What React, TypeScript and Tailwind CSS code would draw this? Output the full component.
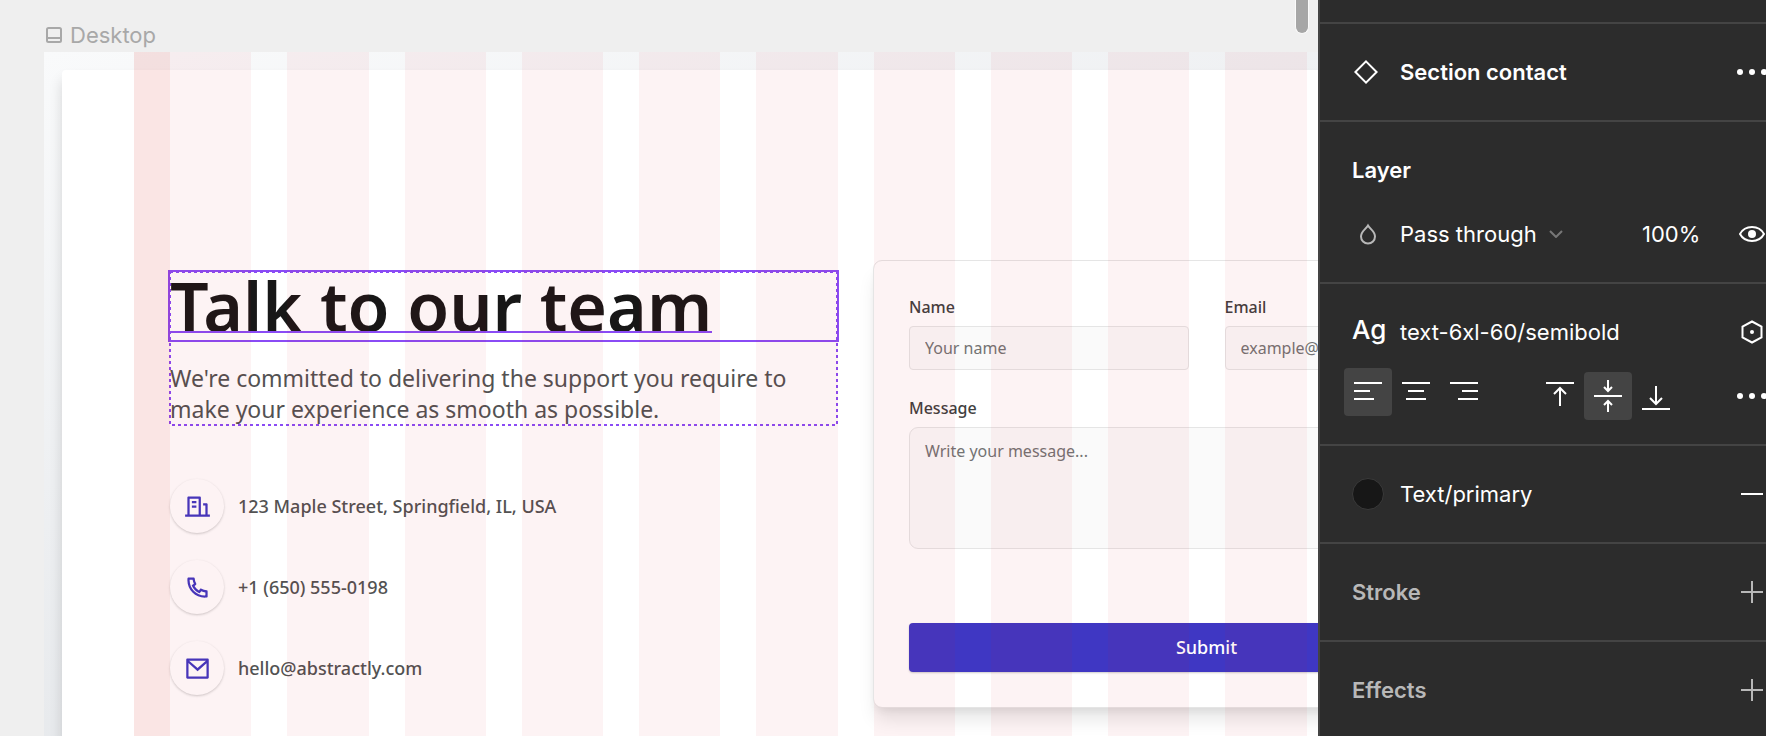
import React from "react";

const purple = "#8a4bf5";

function Rule() {
  return <hr className="h-0.5 border-0 bg-[#444444]" />;
}

const contacts = [
  {
    text: "123 Maple Street, Springfield, IL, USA",
    icon: "M21 19H23V21H1V19H3V4C3 3.45 3.45 3 4 3H14C14.55 3 15 3.45 15 4V19H19V11H17V9H20C20.55 9 21 9.45 21 10V19ZM5 5V19H13V5H5ZM7 11H11V13H7V11ZM7 7H11V9H7V7Z",
  },
  {
    text: "+1 (650) 555-0198",
    icon: "M9.366 10.682C10.304 12.33 11.67 13.696 13.318 14.634L14.202 13.396C14.498 12.982 15.056 12.861 15.503 13.113C16.919 13.887 18.484 14.357 20.121 14.487C20.643 14.529 21 14.965 21 15.484V19.923C21 20.436 20.612 20.866 20.102 20.918C19.572 20.973 19.04 21 18.5 21C9.94 21 3 14.06 3 5.5C3 4.96 3.027 4.427 3.082 3.898C3.134 3.388 3.564 3 4.077 3H8.516C9.035 3 9.471 3.398 9.513 3.915C9.643 5.516 10.113 7.081 10.887 8.497C11.139 8.944 11.018 9.502 10.604 9.798L9.366 10.682ZM6.844 10.025L8.744 8.668C8.205 7.505 7.836 6.271 7.647 5H5.01C5.003 5.166 5 5.333 5 5.5C5 12.956 11.044 19 18.5 19C18.667 19 18.834 18.997 19 18.99V16.353C17.729 16.164 16.495 15.795 15.332 15.256L13.975 17.156C13.429 16.944 12.899 16.693 12.388 16.406L12.33 16.373C10.369 15.256 8.744 13.631 7.627 11.67L7.594 11.612C7.307 11.101 7.056 10.571 6.844 10.025Z",
  },
  {
    text: "hello@abstractly.com",
    icon: "M3 3H21C21.552 3 22 3.448 22 4V20C22 20.552 21.552 21 21 21H3C2.448 21 2 20.552 2 20V4C2 3.448 2.448 3 3 3ZM20 7.238L12.072 14.338L4 7.216V19H20V7.238ZM4.511 5L12.061 11.662L19.502 5H4.511Z",
  },
];

function DesignFrame() {
  return (
    <div className="relative w-[1622px] grow bg-[linear-gradient(163deg,#f9fafb_0%,#d2d6db_130%)] px-[18px] pt-[18px] font-['Noto_Sans',sans-serif]">
      <div className="min-h-full rounded-t-[4px] bg-white px-[108px] pt-[190px] pb-8 shadow-[0_10px_14px_rgba(0,0,0,0.14)]">
        <div className="grid grid-cols-2 gap-9">
          <div className="pt-3">
            <div className="relative">
              <div className="relative">
                <h1 className="text-[68px] leading-[68px] font-semibold text-[#171717]">
                  <span className="relative inline-block">
                    Talk to our team
                    <span className="absolute inset-x-0 top-[59px] h-0.5 bg-[#8a4bf5]" />
                  </span>
                </h1>
                <span className="absolute -inset-0.5 border-2 border-[#8a4bf5]" />
              </div>
              <p className="mt-[23px] text-[23px] leading-[31px] text-[#525252]">
                We're committed to delivering the support you require to
                <br />
                make your experience as smooth as possible.
              </p>
              <svg className="absolute inset-0 size-full overflow-visible" aria-hidden="true">
                <rect width="100%" height="100%" fill="none" stroke={purple} strokeWidth="2" strokeDasharray="3 3" />
              </svg>
            </div>
            <ul className="mt-[54px] flex flex-col gap-[27px]">
              {contacts.map((c) => (
                <li key={c.text} className="flex items-center gap-[14px]">
                  <span className="flex size-[54px] items-center justify-center rounded-full bg-white shadow-[0_1px_3px_rgba(0,0,0,0.12),0_1px_2px_rgba(0,0,0,0.08)]">
                    <svg viewBox="0 0 24 24" className="size-[27px]" fill="#4037c1" aria-hidden="true">
                      <path d={c.icon} />
                    </svg>
                  </span>
                  <span className="text-[18px] leading-[27px] font-medium text-[#525252]">{c.text}</span>
                </li>
              ))}
            </ul>
          </div>

          <form
            className="rounded-[9px] border border-[#e5e5e5] bg-white p-[35px] shadow-[0_14px_18px_-3px_rgba(0,0,0,0.1),0_5px_7px_-2px_rgba(0,0,0,0.06)]"
            onSubmit={(e) => e.preventDefault()}
          >
            <div className="grid grid-cols-2 gap-9">
              <div className="flex flex-col gap-[7px]">
                <label htmlFor="name" className="text-[16px] leading-[23px] font-medium text-[#404040]">
                  Name
                </label>
                <input
                  id="name"
                  placeholder="Your name"
                  className="h-11 w-full rounded-[4px] border border-[#e5e5e5] bg-[#fafafa] px-[15px] text-[16px] leading-[23px] placeholder:text-[#737373]"
                />
              </div>
              <div className="flex flex-col gap-[7px]">
                <label htmlFor="email" className="text-[16px] leading-[23px] font-medium text-[#404040]">
                  Email
                </label>
                <input
                  id="email"
                  type="email"
                  placeholder="example@example.com"
                  className="h-11 w-full rounded-[4px] border border-[#e5e5e5] bg-[#fafafa] px-[15px] text-[16px] leading-[23px] placeholder:text-[#737373]"
                />
              </div>
            </div>
            <div className="mt-[27px] flex flex-col gap-[7px]">
              <label htmlFor="message" className="text-[16px] leading-[23px] font-medium text-[#404040]">
                Message
              </label>
              <textarea
                id="message"
                placeholder="Write your message..."
                className="h-[122px] w-full resize-none rounded-[9px] border border-[#e5e5e5] bg-[#fafafa] px-[15px] py-3 text-[16px] leading-[23px] placeholder:text-[#737373]"
              />
            </div>
            <button
              type="submit"
              className="mt-[74px] h-[49px] w-full rounded-[4px] bg-[#3f37c3] text-[18px] leading-[27px] font-medium text-white shadow-[0_1px_2px_rgba(0,0,0,0.2)]"
            >
              Submit
            </button>
          </form>
        </div>
      </div>

      <div className="pointer-events-none absolute inset-y-0 left-[90px] flex" aria-hidden="true">
        <div className="w-9 bg-[#d11209]/11" />
        <div className="grid w-[1371px] grid-cols-12 gap-9">
          {Array.from({ length: 12 }, (_, i) => (
            <div key={i} className="bg-[#d71428]/5" />
          ))}
        </div>
      </div>
    </div>
  );
}

function Dots() {
  return (
    <svg viewBox="0 0 30 6" className="h-1.5 w-[30px]" fill="#fff" aria-hidden="true">
      <circle cx="3" cy="3" r="3" />
      <circle cx="15" cy="3" r="3" />
      <circle cx="27" cy="3" r="3" />
    </svg>
  );
}

function Plus() {
  return (
    <svg viewBox="0 0 22 22" className="size-[22px]" stroke="#b8b8b8" strokeWidth="2" aria-hidden="true">
      <path d="M11 0V22M0 11H22" />
    </svg>
  );
}

const aligns = [
  { label: "Align left", d: "M0 1H28M0 9H16M0 17H20" },
  { label: "Align center", d: "M0 1H28M6 9H22M4 17H24" },
  { label: "Align right", d: "M0 1H28M12 9H28M8 17H28" },
];

const valigns = [
  { label: "Align top", d: "M0 3H28M14 26V8M8 14L14 8L20 14" },
  { label: "Align middle", d: "M0 16H28M14 0V11M10 7L14 11L18 7M14 32V21M10 25L14 21L18 25" },
  { label: "Align bottom", d: "M0 29H28M14 6V24M8 18L14 24L20 18" },
];

function Inspector() {
  return (
    <aside className="w-[448px] shrink-0 overflow-hidden border-l-2 border-[#444444] bg-[#2c2c2c] font-['Inter',sans-serif] text-[22px] leading-8 text-white">
      <div className="w-[480px]">
        <div className="h-[22px]" />
        <Rule />
        <section className="flex h-24 items-center pl-[34px]">
          <svg viewBox="0 0 24 24" className="size-6" fill="none" stroke="#fff" strokeWidth="2" aria-hidden="true">
            <path d="M12 1.4L22.6 12L12 22.6L1.4 12Z" />
          </svg>
          <h2 className="ml-[22px] w-[337px] font-semibold">Section contact</h2>
          <button type="button" aria-label="More options">
            <Dots />
          </button>
        </section>
        <Rule />
        <section className="h-40 pt-8 pl-8">
          <h2 className="font-semibold">Layer</h2>
          <div className="mt-8 flex items-center">
            <svg viewBox="0 0 32 32" className="size-8" fill="none" stroke="#b8b8b8" strokeWidth="2" aria-hidden="true">
              <path d="M16 7.500C18.500 11.500 23 13.500 23 18.500A7 7 0 0 1 9 18.500C9 13.500 13.500 11.500 16 7.500Z" />
            </svg>
            <button type="button" className="ml-4 flex w-[242px] items-center gap-3">
              Pass through
              <svg viewBox="0 0 14 8" className="h-2 w-[14px]" fill="none" stroke="#777" strokeWidth="2" aria-hidden="true">
                <path d="M1 1L7 7L13 1" />
              </svg>
            </button>
            <span className="w-[97px]">100%</span>
            <button type="button" aria-label="Toggle visibility">
              <svg viewBox="0 0 26 16" className="h-4 w-[26px]" fill="none" stroke="#fff" strokeWidth="2" aria-hidden="true">
                <path d="M1 8C6 -1.300 20 -1.300 25 8C20 17.300 6 17.300 1 8Z" />
                <circle cx="13" cy="8" r="4" fill="#fff" stroke="none" />
              </svg>
            </button>
          </div>
        </section>
        <Rule />
        <section className="h-40 pt-8">
          <div className="flex items-center pl-8">
            <span className="-mt-1 w-12 text-[26px] font-medium">Ag</span>
            <span className="w-[341px]">text-6xl-60/semibold</span>
            <button type="button" aria-label="Edit style">
              <svg viewBox="0 0 22 24" className="h-6 w-[22px]" fill="none" stroke="#fff" strokeWidth="2" aria-hidden="true">
                <path d="M11 1.500L20.500 6.700V17.300L11 22.500L1.500 17.300V6.700Z" />
                <circle cx="11" cy="12" r="2" fill="#fff" stroke="none" />
              </svg>
            </button>
          </div>
          <div className="mt-5 flex items-start pl-6">
            <div className="flex">
              {aligns.map((a, i) => (
                <button
                  key={a.label}
                  type="button"
                  aria-label={a.label}
                  className={
                    i === 0
                      ? "flex size-12 items-center justify-center rounded bg-[#444444]"
                      : "flex size-12 items-center justify-center"
                  }
                >
                  <svg viewBox="0 0 28 20" className="h-5 w-7" stroke="#fff" strokeWidth="2">
                    <path d={a.d} />
                  </svg>
                </button>
              ))}
            </div>
            <div className="mt-1 flex items-center pl-12">
              {valigns.map((a, i) => (
                <button
                  key={a.label}
                  type="button"
                  aria-label={a.label}
                  className={
                    i === 1
                      ? "flex size-12 items-center justify-center rounded bg-[#444444]"
                      : "flex size-12 items-center justify-center"
                  }
                >
                  <svg viewBox="0 0 28 32" className="h-8 w-7" fill="none" stroke="#fff" strokeWidth="2">
                    <path d={a.d} />
                  </svg>
                </button>
              ))}
              <button type="button" aria-label="Type settings" className="ml-[57px]">
                <Dots />
              </button>
            </div>
          </div>
        </section>
        <Rule />
        <section className="flex h-24 items-center pl-8">
          <span className="size-8 rounded-full border border-[#3a3a3a] bg-[#171717]" />
          <span className="ml-4 w-[341px]">Text/primary</span>
          <button type="button" aria-label="Remove fill">
            <svg viewBox="0 0 22 22" className="size-[22px]" stroke="#fff" strokeWidth="2" aria-hidden="true">
              <path d="M0 11H22" />
            </svg>
          </button>
        </section>
        <Rule />
        <section className="flex h-24 items-center pl-8">
          <h2 className="w-[389px] font-semibold text-[#b8b8b8]">Stroke</h2>
          <button type="button" aria-label="Add stroke">
            <Plus />
          </button>
        </section>
        <Rule />
        <section className="flex h-24 items-center pl-8">
          <h2 className="w-[389px] font-semibold text-[#b8b8b8]">Effects</h2>
          <button type="button" aria-label="Add effect">
            <Plus />
          </button>
        </section>
      </div>
    </aside>
  );
}

export default function App() {
  return (
    <div className="flex h-screen overflow-hidden bg-[#efefef]">
      <main className="relative flex min-w-0 flex-1 flex-col items-start overflow-hidden pl-11">
        <div className="flex h-[52px] shrink-0 items-center gap-2 pt-[18px] pl-0.5 font-['Inter',sans-serif] text-[22px] text-[#a8a8a8]">
          <svg viewBox="0 0 16 16" className="size-4" fill="none" stroke="currentColor" strokeWidth="2" aria-hidden="true">
            <rect x="1" y="1" width="14" height="14" rx="1.500" />
            <path d="M1 11H15" />
          </svg>
          Desktop
        </div>
        <DesignFrame />
        <div className="absolute top-0 right-[9px] h-[34px] w-[14px] rounded-b-full border border-t-0 border-[#fafafa] bg-[#a6a6a6]" />
      </main>
      <Inspector />
    </div>
  );
}
